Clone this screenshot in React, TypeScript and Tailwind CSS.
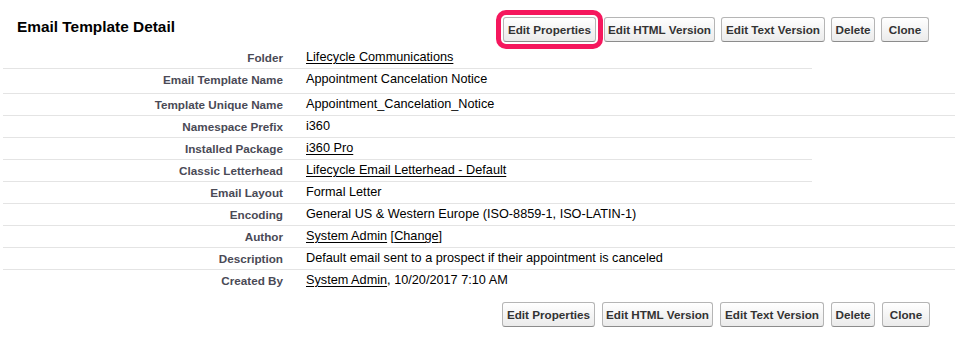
type Field = {
  label: string;
  value: React.ReactNode;
  short?: boolean;
  tall?: boolean;
};

const A = ({ children }: { children: React.ReactNode }) => (
  <a href="#" className="text-black underline underline-offset-[2px]">
    {children}
  </a>
);

const FIELDS: Field[] = [
  { label: "Folder", value: <A>Lifecycle Communications</A>, short: true },
  { label: "Email Template Name", value: "Appointment Cancelation Notice", tall: true },
  { label: "Template Unique Name", value: "Appointment_Cancelation_Notice" },
  { label: "Namespace Prefix", value: "i360" },
  { label: "Installed Package", value: <A>i360 Pro</A>, short: true },
  { label: "Classic Letterhead", value: <A>Lifecycle Email Letterhead - Default</A>, short: true },
  { label: "Email Layout", value: "Formal Letter" },
  { label: "Encoding", value: "General US & Western Europe (ISO-8859-1, ISO-LATIN-1)" },
  {
    label: "Author",
    value: (
      <>
        <A>System Admin</A> [<A>Change</A>]
      </>
    ),
  },
  { label: "Description", value: "Default email sent to a prospect if their appointment is canceled" },
  {
    label: "Created By",
    value: (
      <>
        <A>System Admin</A>, 10/20/2017 7:10 AM
      </>
    ),
  },
];

const BUTTONS = [
  { label: "Edit Properties", w: "w-[93px]" },
  { label: "Edit HTML Version", w: "w-[111px]" },
  { label: "Edit Text Version", w: "w-[104px]" },
  { label: "Delete", w: "w-[44px]" },
  { label: "Clone", w: "w-[48px]" },
];

function Buttons({ highlight }: { highlight?: boolean }) {
  return (
    <div className={`flex items-center ${highlight ? "gap-[6px]" : "gap-[7px]"}`}>
      {BUTTONS.map((b, i) => (
        <button
          key={b.label}
          type="button"
          className={`${b.w} flex h-[25px] items-center justify-center rounded-[3px] border border-[#b5b5b5] border-b-[#8c8c8c] bg-linear-to-b from-white to-[#ebebeb] text-[11.7px] font-bold text-[#333] ${
            highlight && i === 0
              ? "mr-[2px] outline-[5px] outline-solid outline-[#f5175d] outline-offset-[2px]"
              : ""
          }`}
        >
          {b.label}
        </button>
      ))}
    </div>
  );
}

export default function App() {
  return (
    <div className="h-[344px] w-[955px] bg-white pl-[3px] font-['Liberation_Sans',Arial,sans-serif] text-black">
      <div className="flex h-[47px] items-start pt-[17px]">
        <h2 className="-mt-[2px] w-[500px] pl-[14px] text-[15.4px] leading-[24px] font-bold">
          Email Template Detail
        </h2>
        <Buttons highlight />
      </div>

      <div>
        {FIELDS.map((f, i) => (
          <div key={f.label} className={f.short ? "mr-[143px]" : ""}>
            <div
              className={`flex items-start ${f.tall ? "h-[24px]" : "h-[21px]"} ${
                i < FIELDS.length - 1 ? "box-content border-b border-[#e4e4e4]" : ""
              }`}
            >
              <div className="w-[290px] shrink-0 pr-[10px] text-right text-[11.7px] leading-[21px] font-bold text-[#4a4a56]">
                {f.label}
              </div>
              <div className="pl-[13px] text-[12.7px] leading-[21px] whitespace-nowrap">{f.value}</div>
            </div>
          </div>
        ))}
      </div>

      <div className="mt-[11px] pl-[499px]">
        <Buttons />
      </div>
    </div>
  );
}
